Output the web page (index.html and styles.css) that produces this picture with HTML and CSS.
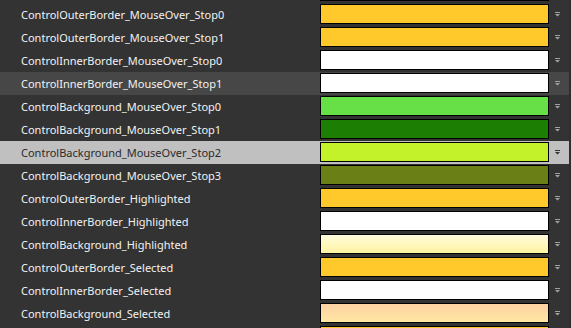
FILE: index.html
```html
<!DOCTYPE html>
<html>
<head>
    <link rel="stylesheet" href="styles.css">
</head>
<body>
    <div class="editor">
        <div class="list">
            <div class="row">
                <span class="label"></span>
                <span class="swatch white"></span>
                <span class="arrow"><svg width="5" height="5" viewBox="0 0 5 5"><path d="M0 0h5v1H0z M0 2h5L2.5 4.5z"/></svg></span>
            </div>
            <div class="row">
                <span class="label">ControlOuterBorder_MouseOver_Stop0</span>
                <span class="swatch yellow"></span>
                <span class="arrow"><svg width="5" height="5" viewBox="0 0 5 5"><path d="M0 0h5v1H0z M0 2h5L2.5 4.5z"/></svg></span>
            </div>
            <div class="row">
                <span class="label">ControlOuterBorder_MouseOver_Stop1</span>
                <span class="swatch yellow"></span>
                <span class="arrow"><svg width="5" height="5" viewBox="0 0 5 5"><path d="M0 0h5v1H0z M0 2h5L2.5 4.5z"/></svg></span>
            </div>
            <div class="row">
                <span class="label">ControlInnerBorder_MouseOver_Stop0</span>
                <span class="swatch white"></span>
                <span class="arrow"><svg width="5" height="5" viewBox="0 0 5 5"><path d="M0 0h5v1H0z M0 2h5L2.5 4.5z"/></svg></span>
            </div>
            <div class="row hover">
                <span class="label">ControlInnerBorder_MouseOver_Stop1</span>
                <span class="swatch white"></span>
                <span class="arrow"><svg width="5" height="5" viewBox="0 0 5 5"><path d="M0 0h5v1H0z M0 2h5L2.5 4.5z"/></svg></span>
            </div>
            <div class="row">
                <span class="label">ControlBackground_MouseOver_Stop0</span>
                <span class="swatch light-green"></span>
                <span class="arrow"><svg width="5" height="5" viewBox="0 0 5 5"><path d="M0 0h5v1H0z M0 2h5L2.5 4.5z"/></svg></span>
            </div>
            <div class="row">
                <span class="label">ControlBackground_MouseOver_Stop1</span>
                <span class="swatch dark-green"></span>
                <span class="arrow"><svg width="5" height="5" viewBox="0 0 5 5"><path d="M0 0h5v1H0z M0 2h5L2.5 4.5z"/></svg></span>
            </div>
            <div class="row selected">
                <span class="label">ControlBackground_MouseOver_Stop2</span>
                <span class="swatch lime"></span>
                <span class="arrow"><svg width="5" height="5" viewBox="0 0 5 5"><path d="M0 0h5v1H0z M0 2h5L2.5 4.5z"/></svg></span>
            </div>
            <div class="row">
                <span class="label">ControlBackground_MouseOver_Stop3</span>
                <span class="swatch olive"></span>
                <span class="arrow"><svg width="5" height="5" viewBox="0 0 5 5"><path d="M0 0h5v1H0z M0 2h5L2.5 4.5z"/></svg></span>
            </div>
            <div class="row">
                <span class="label">ControlOuterBorder_Highlighted</span>
                <span class="swatch yellow"></span>
                <span class="arrow"><svg width="5" height="5" viewBox="0 0 5 5"><path d="M0 0h5v1H0z M0 2h5L2.5 4.5z"/></svg></span>
            </div>
            <div class="row">
                <span class="label">ControlInnerBorder_Highlighted</span>
                <span class="swatch white"></span>
                <span class="arrow"><svg width="5" height="5" viewBox="0 0 5 5"><path d="M0 0h5v1H0z M0 2h5L2.5 4.5z"/></svg></span>
            </div>
            <div class="row">
                <span class="label">ControlBackground_Highlighted</span>
                <span class="swatch pale-yellow"></span>
                <span class="arrow"><svg width="5" height="5" viewBox="0 0 5 5"><path d="M0 0h5v1H0z M0 2h5L2.5 4.5z"/></svg></span>
            </div>
            <div class="row">
                <span class="label">ControlOuterBorder_Selected</span>
                <span class="swatch yellow"></span>
                <span class="arrow"><svg width="5" height="5" viewBox="0 0 5 5"><path d="M0 0h5v1H0z M0 2h5L2.5 4.5z"/></svg></span>
            </div>
            <div class="row">
                <span class="label">ControlInnerBorder_Selected</span>
                <span class="swatch white"></span>
                <span class="arrow"><svg width="5" height="5" viewBox="0 0 5 5"><path d="M0 0h5v1H0z M0 2h5L2.5 4.5z"/></svg></span>
            </div>
            <div class="row">
                <span class="label">ControlBackground_Selected</span>
                <span class="swatch peach"></span>
                <span class="arrow"><svg width="5" height="5" viewBox="0 0 5 5"><path d="M0 0h5v1H0z M0 2h5L2.5 4.5z"/></svg></span>
            </div>
            <div class="row">
                <span class="label"></span>
                <span class="swatch yellow"></span>
                <span class="arrow"><svg width="5" height="5" viewBox="0 0 5 5"><path d="M0 0h5v1H0z M0 2h5L2.5 4.5z"/></svg></span>
            </div>
        </div>
    </div>
</body>
</html>
```

FILE: styles.css
```css
* {
    margin: 0;
    padding: 0;
    box-sizing: border-box;
}

body {
    height: 100vh;
    overflow: hidden;
    background-color: #2e2e2e;
    font-family: "Noto Sans", sans-serif;
    font-size: 11px;
}

.editor {
    width: 569px;
    height: 100vh;
    background-color: #333333;
    overflow: hidden;
}

.list {
    margin-top: -20px;
}

.row {
    display: grid;
    grid-template-columns: 320px 229px 20px;
    height: 23px;
    align-items: center;
    color: #f2f2f2;
}

.row.hover {
    background-color: #474747;
}

.row.selected {
    background-color: #c0c0c0;
    color: #2b2b2b;
}

.label {
    padding-left: 21px;
    white-space: nowrap;
    overflow: hidden;
}

.swatch {
    align-self: start;
    margin-top: 1px;
    height: 20px;
    border: 1px solid #000;
}

.arrow {
    display: flex;
    padding-left: 6px;
    fill: #a0a0a0;
}

.row.selected .arrow {
    fill: #333333;
}

.yellow { background-color: #ffc92c; }
.white { background-color: #ffffff; }
.light-green { background-color: #67e047; }
.dark-green { background-color: #1d7e04; }
.lime { background-color: #c3f22a; }
.olive { background-color: #6a7f16; }
.pale-yellow { background: linear-gradient(#fffbdc, #fff4a2); }
.peach { background: linear-gradient(#fdd1a2, #ffe7a4); }
```
